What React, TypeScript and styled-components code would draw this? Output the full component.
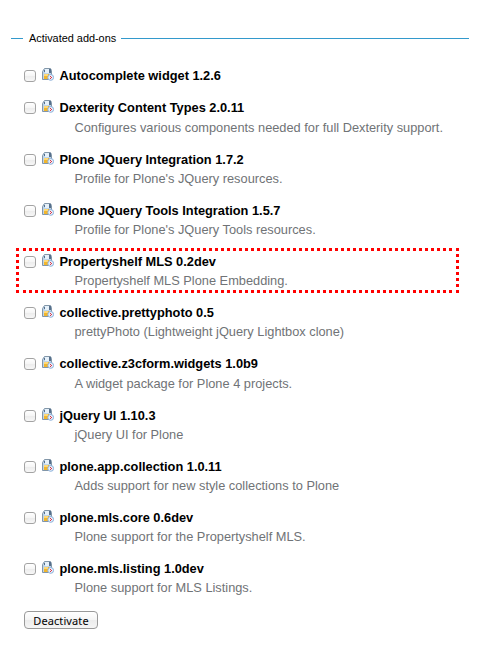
import React from 'react';
import styled, { createGlobalStyle } from 'styled-components';

const GlobalStyle = createGlobalStyle`
  * { box-sizing: border-box; }
  body {
    margin: 0;
    background: #fff;
    font-family: "Liberation Sans", Arial, sans-serif;
  }
`;

const Page = styled.main`
  width: 478px;
  height: 666px;
  padding: 31px 9px 0 11px;
  overflow: hidden;
`;

const Legend = styled.div`
  display: flex;
  align-items: center;
  height: 15px;
  font-size: 10.9px;
  line-height: 15px;
  color: #000;
  white-space: nowrap;
  &::before, &::after {
    content: "";
    height: 1px;
    background: #3399cc;
  }
  &::before { width: 12px; margin-right: 6px; }
  &::after { flex: 1; margin-left: 5px; }
`;

const List = styled.ul`
  list-style: none;
  margin: 0;
  padding: 21px 0 0 13px;
`;

const Item = styled.li<{ $short: boolean }>`
  position: relative;
  height: ${p => (p.$short ? 32.4 : 51.2)}px;
`;

const Highlight = styled.span`
  position: absolute;
  left: -8px;
  top: -5px;
  width: 443px;
  height: 45px;
  border: 3px dotted #f00;
`;

const Heading = styled.label`
  display: flex;
  height: 18px;
`;

const Checkbox = styled.input`
  appearance: none;
  width: 12px;
  height: 12px;
  margin: 3px 6px 0 0;
  border: 1px solid #a3a3a3;
  border-radius: 3px;
  background: linear-gradient(#fff, #f6f6f6 45%, #ececec 50%, #f7f7f7);
`;

const Icon = styled.svg`
  width: 12px;
  height: 13px;
  margin: 1px 5.5px 0 0;
`;

const Title = styled.span`
  font-size: 12.8px;
  font-weight: bold;
  line-height: 18px;
  color: #000;
  white-space: nowrap;
`;

const Description = styled.p`
  margin: 1.2px 0 0 50.5px;
  font-size: 12.8px;
  line-height: 18px;
  color: #707376;
  white-space: nowrap;
`;

const Button = styled.button`
  display: block;
  width: 74px;
  height: 18px;
  margin: 0 0 0 13px;
  padding: 0;
  border: 1px solid #999;
  border-radius: 4px;
  background: linear-gradient(#fff, #f5f5f5 48%, #ececec 52%, #f5f5f5);
  font: 11px/15px "Noto Sans", sans-serif;
  letter-spacing: 0.1px;
  color: #000;
`;

const AddonIcon = () => (
  <Icon viewBox="0 0 12 13" shapeRendering="geometricPrecision" aria-hidden="true">
    <path d="M.5 3.5 2.5.5h6l1 2v9h-9z" fill="#bdd4e9" stroke="#8296a8" />
    <path d="M3 1h4v4H3z" fill="#e6f1fa" />
    <path d="M2 2h1v2H2zM7 1h2v4H7z" fill="#56708c" />
    <path d="M2 6h5v5H2z" fill="#f2b62c" />
    <path d="M2 6h4v2H2z" fill="#ffd977" />
    <circle cx="8.7" cy="9.4" r="2.9" fill="#e3f0fb" stroke="#84a9d6" strokeWidth=".9" />
    <path d="M8 8h1v1H8zM9 9h1v1H9zM8 10h1v1H8z" fill="#de3542" />
  </Icon>
);

type Addon = { title: string; text?: string; marked?: boolean };

const addons: Addon[] = [
  { title: 'Autocomplete widget 1.2.6' },
  { title: 'Dexterity Content Types 2.0.11', text: 'Configures various components needed for full Dexterity support.' },
  { title: 'Plone JQuery Integration 1.7.2', text: "Profile for Plone's JQuery resources." },
  { title: 'Plone JQuery Tools Integration 1.5.7', text: "Profile for Plone's JQuery Tools resources." },
  { title: 'Propertyshelf MLS 0.2dev', text: 'Propertyshelf MLS Plone Embedding.', marked: true },
  { title: 'collective.prettyphoto 0.5', text: 'prettyPhoto (Lightweight jQuery Lightbox clone)' },
  { title: 'collective.z3cform.widgets 1.0b9', text: 'A widget package for Plone 4 projects.' },
  { title: 'jQuery UI 1.10.3', text: 'jQuery UI for Plone' },
  { title: 'plone.app.collection 1.0.11', text: 'Adds support for new style collections to Plone' },
  { title: 'plone.mls.core 0.6dev', text: 'Plone support for the Propertyshelf MLS.' },
  { title: 'plone.mls.listing 1.0dev', text: 'Plone support for MLS Listings.' },
];

export default function App() {
  return (
    <>
      <GlobalStyle />
      <Page>
        <Legend>Activated add-ons</Legend>
        <List>
          {addons.map(a => (
            <Item key={a.title} $short={!a.text}>
              <Heading>
                <Checkbox type="checkbox" />
                <AddonIcon />
                <Title>{a.title}</Title>
              </Heading>
              {a.text && <Description>{a.text}</Description>}
              {a.marked && <Highlight />}
            </Item>
          ))}
        </List>
        <Button>Deactivate</Button>
      </Page>
    </>
  );
}
